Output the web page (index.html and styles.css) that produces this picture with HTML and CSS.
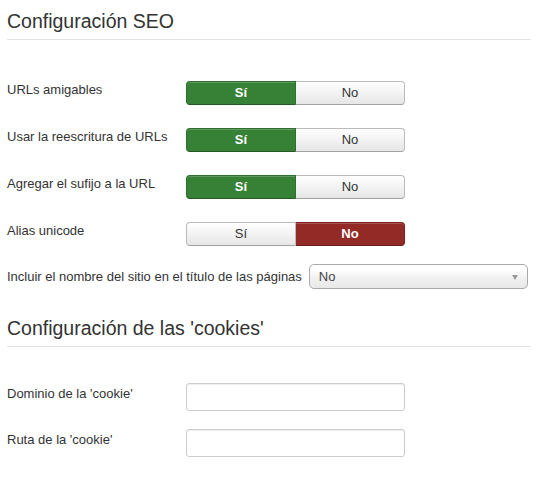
FILE: index.html
```html
<!DOCTYPE html>
<html lang="es">
<head>
    <meta charset="UTF-8">
    <title>Configuración SEO</title>

    <link rel="stylesheet" href="styles.css">
</head>
<body>

<div class="page">

    <h2 class="section">Configuración SEO</h2>

    <div class="fields fields-seo">

        <div class="control-group">
            <label class="control-label">URLs amigables</label>
            <div class="btn-group">
                <span class="btn btn-yes active">Sí</span>
                <span class="btn">No</span>
            </div>
        </div>

        <div class="control-group">
            <label class="control-label">Usar la reescritura de URLs</label>
            <div class="btn-group">
                <span class="btn btn-yes active">Sí</span>
                <span class="btn">No</span>
            </div>
        </div>

        <div class="control-group">
            <label class="control-label">Agregar el sufijo a la URL</label>
            <div class="btn-group">
                <span class="btn btn-yes active">Sí</span>
                <span class="btn">No</span>
            </div>
        </div>

        <div class="control-group">
            <label class="control-label">Alias unicode</label>
            <div class="btn-group">
                <span class="btn">Sí</span>
                <span class="btn btn-no active">No</span>
            </div>
        </div>

        <div class="control-group inline">
            <label class="control-label">Incluir el nombre del sitio en el título de las páginas</label>
            <div class="select">
                <span>No</span>
                <b class="caret"></b>
            </div>
        </div>

    </div>

    <h2 class="section second">Configuración de las 'cookies'</h2>

    <div class="fields fields-cookies">

        <div class="control-group">
            <label class="control-label text">Dominio de la 'cookie'</label>
            <input class="input" type="text" value="">
        </div>

        <div class="control-group">
            <label class="control-label text">Ruta de la 'cookie'</label>
            <input class="input" type="text" value="">
        </div>

    </div>

</div>

</body>
</html>
```

FILE: styles.css
```css
* {
    margin: 0;
    padding: 0;
    box-sizing: border-box;
}

body {
    background: #fff;
    color: #333;
    font-family: "Liberation Sans", Arial, sans-serif;
    font-size: 13px;
    line-height: 18px;
}

.page {
    padding: 0 17px 0 7px;
}

/* section headings */

.section {
    font-size: 19.5px;
    line-height: 24px;
    font-weight: 400;
    color: #333;
    margin-top: 9px;
    padding-bottom: 6px;
    border-bottom: 1px solid #e3e3e3;
}

.section.second {
    margin-top: 27px;
}

.fields-seo {
    padding-top: 41px;
}

.fields-cookies {
    padding-top: 36px;
}

.control-group {
    display: flex;
    align-items: flex-start;
    margin-bottom: 23px;
}

.fields-cookies .control-group {
    margin-bottom: 18px;
}

.control-label {
    width: 179px;
    flex: none;
}

.control-label.text {
    padding-top: 2px;
}

/* yes / no toggles */

.btn-group {
    display: flex;
    width: 219px;
    height: 24px;
}

.btn {
    flex: 1 1 0;
    display: flex;
    align-items: center;
    justify-content: center;
    color: #333;
    background: linear-gradient(#ffffff, #e6e6e6);
    border: 1px solid #bbb;
    border-bottom-color: #a2a2a2;
    box-shadow: inset 0 1px 0 rgba(255, 255, 255, .2);
}

.btn:first-child {
    border-radius: 4px 0 0 4px;
}

.btn:last-child {
    border-radius: 0 4px 4px 0;
    border-left: 0;
}

.btn-yes.active {
    background: #378137;
    border-color: #2e6e2e;
    border-bottom-color: #255a25;
    color: #fff;
    font-weight: 700;
}

.btn-no.active {
    background: #942a25;
    border-color: #7d231f;
    border-bottom-color: #6a1d1a;
    color: #fff;
    font-weight: 700;
}

/* dropdown row */

.control-group.inline {
    align-items: center;
    margin-top: -5px;
    margin-bottom: 0;
}

.control-group.inline .control-label {
    width: auto;
    margin-right: 7px;
}

.select {
    width: 219px;
    flex: none;
    display: flex;
    align-items: center;
    justify-content: space-between;
    height: 25px;
    padding: 0 9px 0 9px;
    border: 1px solid #aaa;
    border-radius: 5px;
    background: linear-gradient(#ffffff 20%, #f0f0f0 60%, #e8e8e8);
    color: #444;
}

.caret {
    width: 0;
    height: 0;
    border-left: 3px solid transparent;
    border-right: 3px solid transparent;
    border-top: 5px solid #999;
    margin-top: 1px;
}

/* text inputs */

.input {
    width: 219px;
    height: 28px;
    border: 1px solid #ccc;
    border-radius: 3px;
    background: #fff;
    box-shadow: inset 0 1px 1px rgba(0, 0, 0, .075);
    font: inherit;
    padding: 4px 6px;
}
```
